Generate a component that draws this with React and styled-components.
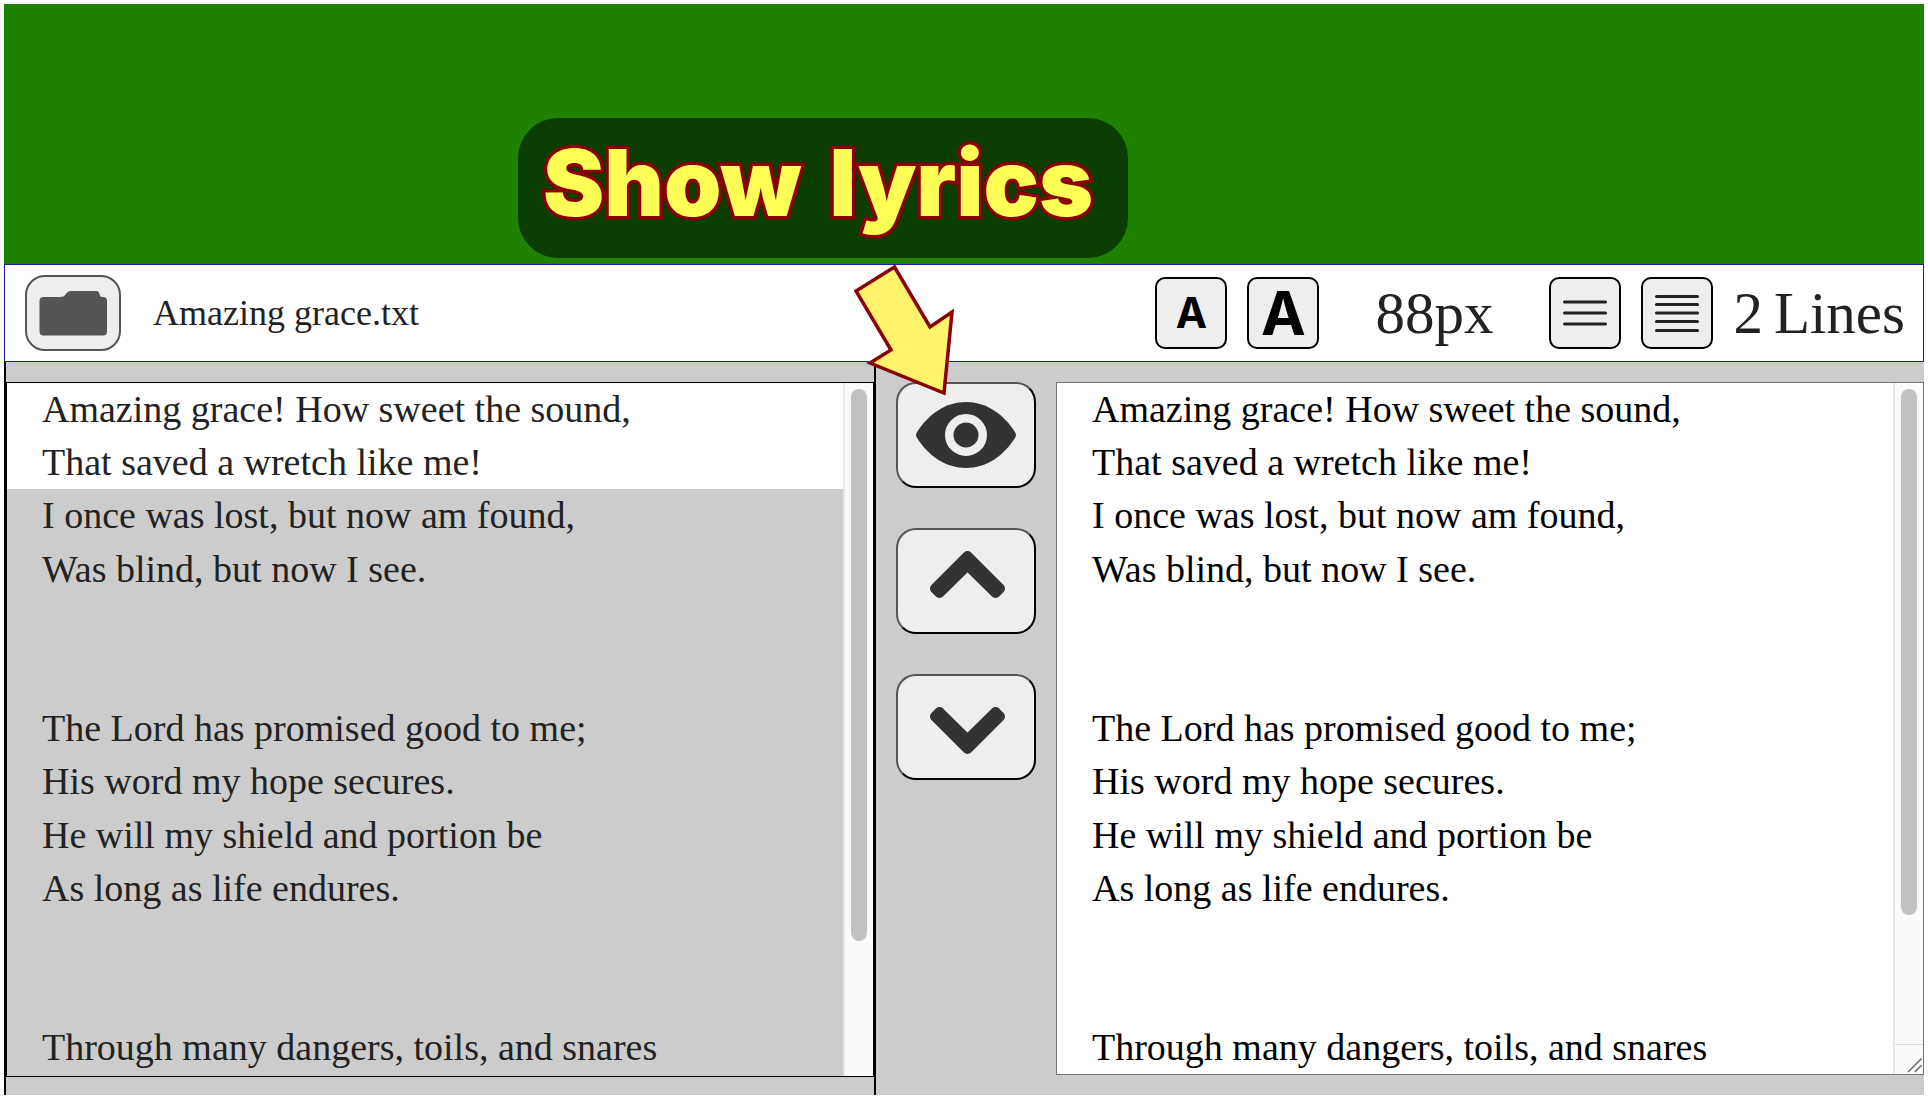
import React, { useState } from "react";
import styled, { createGlobalStyle } from "styled-components";

const GlobalStyle = createGlobalStyle`
  *, *::before, *::after { box-sizing: border-box; }
  html, body { margin: 0; padding: 0; background: #fff; }
  body {
    color: #222;
    font-family: "Liberation Serif", "Times New Roman", serif;
  }
  button, textarea { font: inherit; color: inherit; margin: 0; }
`;

const Page = styled.div`
  min-height: 100vh;
  padding: 4px 4px 5px;
  display: flex;
`;

const Frame = styled.div`
  position: relative;
  flex: 1;
  min-width: 0;
  display: flex;
  flex-direction: column;
`;

const Screen = styled.header`
  height: 260px;
  background: #1e8200;
`;

const Callout = styled.h1`
  position: absolute;
  left: 514px;
  top: 114px;
  width: 610px;
  height: 140px;
  margin: 0;
  padding: 0 25px;
  border-radius: 40px;
  background: #0a3d00;
  color: #ffff55;
  display: flex;
  gap: 28px;
  font: 900 92px/130px Inter, "Open Sans", sans-serif;
  white-space: nowrap;
  -webkit-text-stroke: 7px #8b0000;
  paint-order: stroke fill;
`;

const Arrow = styled.svg`
  position: absolute;
  left: 850px;
  top: 257px;
  width: 104px;
  height: 140px;
  pointer-events: none;
`;

const Toolbar = styled.div`
  min-height: 98px;
  padding: 0 18px 0 20px;
  border: 1px solid #1c1ca8;
  background: #fff;
  display: flex;
  align-items: center;
`;

const FolderButton = styled.button`
  width: 96px;
  height: 76px;
  padding: 0;
  border: 2px solid #555;
  border-radius: 20px;
  background: #eee;
`;

const FileName = styled.span`
  margin-left: 32px;
  font-size: 36px;
  line-height: 40px;
`;

const Settings = styled.div`
  margin-left: auto;
  display: flex;
  align-items: center;
  gap: 56px;
`;

const Group = styled.div`
  display: flex;
  align-items: center;
  gap: 20px;
`;

const SquareButton = styled.button`
  width: 72px;
  height: 72px;
  padding: 0;
  border: 2px solid #000;
  border-radius: 10px;
  background: #eee;
  color: #000;
  display: flex;
  align-items: center;
  justify-content: center;
  font: 700 ${(p) => p.$size || 42}px/68px Inter, "Open Sans", sans-serif;
`;

const Value = styled.output`
  display: flex;
  gap: 11px;
  font-size: 59px;
  line-height: 68px;
`;

const Icon = styled.svg`
  display: block;
  width: 100%;
  height: 100%;
`;

const Main = styled.main`
  flex: 1;
  display: flex;
  background: #ccc;
`;

const PreviewColumn = styled.section`
  box-sizing: content-box;
  flex: 1 1 0;
  min-width: 0;
  padding: 20px 0 18px;
  border: solid #000;
  border-width: 0 2px;
  display: flex;
`;

const EditorColumn = styled.section`
  flex: 1 1 0;
  min-width: 0;
  padding: 20px 0;
  display: flex;
`;

const Controls = styled.nav`
  width: 180px;
  padding: 20px;
  display: flex;
  flex-direction: column;
  gap: 40px;
`;

const ControlButton = styled.button`
  height: 106px;
  padding: 0;
  border: 2px solid;
  border-color: #555 #000 #000 #555;
  border-radius: 20px;
  background: #eee;
  color: #333;
`;

const Pane = styled.div`
  flex: 1;
  min-width: 0;
  border: 1px solid ${(p) => p.$border};
  background: ${(p) => p.$background};
  display: flex;
  font-size: 38px;
  line-height: 1.4;
`;

const Lines = styled.ul`
  flex: 1;
  min-width: 0;
  margin: 0;
  padding: 0;
  list-style: none;
  overflow: hidden;
`;

const Line = styled.li`
  height: 1.4em;
  padding-left: 35px;
  background: ${(p) => (p.$active ? "#fff" : "transparent")};
  white-space: pre;
`;

const Editor = styled.textarea`
  flex: 1;
  min-width: 0;
  padding: 0 0 0 35px;
  border: 0;
  outline: 0;
  background: transparent;
  color: #000;
  line-height: inherit;
  resize: none;
  overflow: hidden;
`;

const ScrollSide = styled.div`
  width: 30px;
  border-left: 2px solid #e8e8e8;
  background: #fafafa;
  display: flex;
  flex-direction: column;
`;

const Track = styled.div`
  flex: 1;
  padding: 6px 5px 6px 6px;
`;

const Thumb = styled.div`
  width: 16px;
  height: 81%;
  border-radius: 8px;
  background: #c1c1c1;
`;

const Grip = styled.svg`
  width: 28px;
  height: 30px;
  border-top: 1px solid #ddd;
`;

const LYRICS = [
  "Amazing grace! How sweet the sound,",
  "That saved a wretch like me!",
  "I once was lost, but now am found,",
  "Was blind, but now I see.",
  "",
  "",
  "The Lord has promised good to me;",
  "His word my hope secures.",
  "He will my shield and portion be",
  "As long as life endures.",
  "",
  "",
  "Through many dangers, toils, and snares",
];

function Rules({ ys }) {
  return (
    <Icon viewBox="0 0 68 68" stroke="#222" strokeWidth="3" strokeLinecap="round">
      {ys.map((y) => (
        <path key={y} d={`M13.5 ${y}H54.5`} />
      ))}
    </Icon>
  );
}

function Chevron({ d }) {
  return (
    <Icon viewBox="0 0 136 102" fill="currentColor" stroke="currentColor" strokeWidth="10" strokeLinejoin="round">
      <path d={d} />
    </Icon>
  );
}

export default function App() {
  const [text, setText] = useState(LYRICS.join("\n"));
  return (
    <>
      <GlobalStyle />
      <Page>
        <Frame>
          <Screen />
          <Toolbar>
            <FolderButton aria-label="Open file">
              <Icon viewBox="0 0 92 72" fill="#555">
                <path d="M16.5 20H33Q37 20 38.500 17.500Q40.500 14 44 14H69Q72 14 72.500 17Q73 20 75 20H76Q80 20 80 24V54.500Q80 58.500 76 58.500H16.500Q12.500 58.500 12.500 54.500V24Q12.500 20 16.500 20Z" />
              </Icon>
            </FolderButton>
            <FileName>Amazing grace.txt</FileName>
            <Settings>
              <Group>
                <SquareButton aria-label="Smaller text">A</SquareButton>
                <SquareButton aria-label="Larger text" $size={60}>A</SquareButton>
              </Group>
              <Value>88px</Value>
              <Group>
                <SquareButton aria-label="Fewer lines">
                  <Rules ys={[23, 34, 45]} />
                </SquareButton>
                <SquareButton aria-label="More lines">
                  <Rules ys={[17.5, 25.5, 34, 42.5, 51.5]} />
                </SquareButton>
                <Value>
                  <span>2</span>
                  <span>Lines</span>
                </Value>
              </Group>
            </Settings>
          </Toolbar>
          <Main>
            <PreviewColumn>
              <Pane $border="#000" $background="#ccc">
                <Lines>
                  {text.split("\n").map((line, i) => (
                    <Line key={i} $active={i < 2}>{line}</Line>
                  ))}
                </Lines>
                <ScrollSide>
                  <Track><Thumb /></Track>
                </ScrollSide>
              </Pane>
            </PreviewColumn>
            <Controls>
              <ControlButton aria-label="Show lyrics">
                <Icon viewBox="0 0 136 102">
                  <path fill="currentColor" d="M18.500 49C30 30 48 18 68 18S106 30 117.500 49Q118.500 51 117.500 53C106 72 88 84 68 84S30 72 18.500 53Q17.500 51 18.500 49Z" />
                  <circle cx="68" cy="51" r="16.750" fill="none" stroke="#eee" strokeWidth="8.500" />
                </Icon>
              </ControlButton>
              <ControlButton aria-label="Previous lines">
                <Chevron d="M37 58.500L69.500 26L102 58.500L97.500 63L69.500 35.500L41.500 63Z" />
              </ControlButton>
              <ControlButton aria-label="Next lines">
                <Chevron d="M37 40.500L69.500 73L102 40.500L97.500 36L69.500 63.500L41.500 36Z" />
              </ControlButton>
            </Controls>
            <EditorColumn>
              <Pane $border="#767676" $background="#fff">
                <Editor
                  aria-label="Lyrics"
                  spellCheck={false}
                  value={text}
                  onChange={(e) => setText(e.target.value)}
                />
                <ScrollSide>
                  <Track><Thumb /></Track>
                  <Grip viewBox="0 0 28 30" stroke="#666" strokeWidth="1.500">
                    <path d="M13 28L27 14M20 28L27 21" />
                  </Grip>
                </ScrollSide>
              </Pane>
            </EditorColumn>
          </Main>
          <Callout>
            <span>Show</span>
            <span>lyrics</span>
          </Callout>
          <Arrow viewBox="855 261 104 140" aria-hidden="true">
            <path fill="#fff36b" stroke="#8b0000" strokeWidth="3.500" d="M895.500 267L857 291L892 350L871 363L945 393L953 312L931 327Z" />
          </Arrow>
        </Frame>
      </Page>
    </>
  );
}
